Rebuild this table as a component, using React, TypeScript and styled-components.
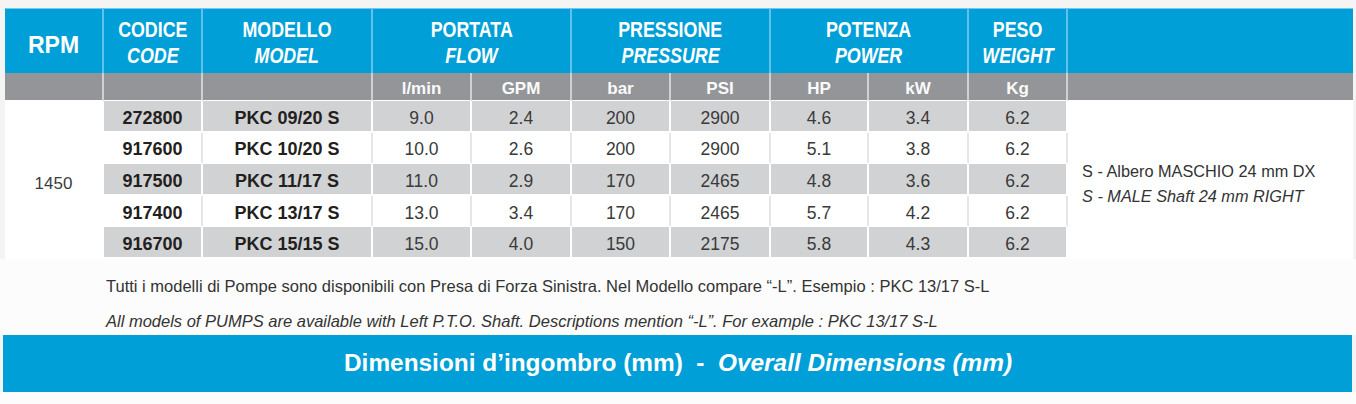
import styled, { createGlobalStyle } from 'styled-components';

const GlobalStyle = createGlobalStyle`
  body {
    margin: 0;
    background: #f4f4f4;
    font-family: "Liberation Sans", Arial, sans-serif;
  }
`;

const BLUE = '#009fd7';

interface Pump {
  code: string;
  model: string;
  lmin: string;
  gpm: string;
  bar: string;
  psi: string;
  hp: string;
  kw: string;
  kg: string;
}

const pumps: Pump[] = [
  { code: '272800', model: 'PKC 09/20 S', lmin: '9.0', gpm: '2.4', bar: '200', psi: '2900', hp: '4.6', kw: '3.4', kg: '6.2' },
  { code: '917600', model: 'PKC 10/20 S', lmin: '10.0', gpm: '2.6', bar: '200', psi: '2900', hp: '5.1', kw: '3.8', kg: '6.2' },
  { code: '917500', model: 'PKC 11/17 S', lmin: '11.0', gpm: '2.9', bar: '170', psi: '2465', hp: '4.8', kw: '3.6', kg: '6.2' },
  { code: '917400', model: 'PKC 13/17 S', lmin: '13.0', gpm: '3.4', bar: '170', psi: '2465', hp: '5.7', kw: '4.2', kg: '6.2' },
  { code: '916700', model: 'PKC 15/15 S', lmin: '15.0', gpm: '4.0', bar: '150', psi: '2175', hp: '5.8', kw: '4.3', kg: '6.2' },
];

const Page = styled.div`
  padding-top: 8px;
  width: 1356px;
`;

const Table = styled.div`
  margin-left: 5px;
  width: 1348px;
  display: grid;
  grid-template-columns: 99px 99px 170px 99px 100px 99px 100px 98px 100px 99px 285px;
  grid-template-rows: 65px 28px repeat(5, 31.6px);
  background: #fff;
`;

const HeadCell = styled.div<{ $span?: number; $last?: boolean }>`
  grid-column: span ${({ $span }) => $span || 1};
  background: ${BLUE};
  border-top: 1px solid #6fcbee;
  border-right: ${({ $last }) => ($last ? 'none' : '2px solid #5fc2ea')};
  display: flex;
  flex-direction: column;
  align-items: center;
  justify-content: center;
  padding-top: 4px;
  color: #fff;
  font-weight: 700;
  font-size: 22px;
  line-height: 26px;
  box-sizing: border-box;
`;

// the print uses a condensed face; squeeze the regular one
const HeadText = styled.span<{ $italic?: boolean }>`
  display: inline-block;
  white-space: nowrap;
  transform: scaleX(0.81);
  font-style: ${({ $italic }) => ($italic ? 'italic' : 'normal')};
`;

const RpmLabel = styled.span`
  font-size: 23px;
  padding-top: 4px;
`;

const UnitCell = styled.div<{ $last?: boolean }>`
  background: #939598;
  border-right: ${({ $last }) => ($last ? 'none' : '2px solid #cfd0d2')};
  border-bottom: 1px solid #fff;
  display: flex;
  align-items: center;
  justify-content: center;
  padding-top: 4px;
  color: #fafafa;
  font-weight: 700;
  font-size: 17px;
  box-sizing: border-box;
`;

const SideCell = styled.div<{ $col: number }>`
  grid-column: ${({ $col }) => $col};
  grid-row: 3 / span 5;
  display: flex;
  align-items: center;
  padding-top: 8px;
  box-sizing: border-box;
  color: #3c3c3c;
`;

const RpmValue = styled(SideCell)`
  justify-content: center;
  font-size: 17px;
  border-right: 2px solid #fff;
`;

const Notes = styled(SideCell)`
  flex-direction: column;
  align-items: flex-start;
  justify-content: center;
  padding-left: 14px;
  font-size: 16.3px;
  line-height: 25px;
  white-space: nowrap;
  color: #333;
`;

const NoteEn = styled.span`
  font-style: italic;
`;

const DataCell = styled.div<{ $shade: boolean; $strong?: boolean }>`
  background: ${({ $shade }) => ($shade ? '#d1d2d4' : '#fff')};
  border-right: 2px solid ${({ $shade }) => ($shade ? '#fff' : '#e6e6e6')};
  border-bottom: 2px solid #fff;
  display: flex;
  align-items: center;
  justify-content: center;
  padding-top: 5px;
  box-sizing: border-box;
  font-size: ${({ $strong }) => ($strong ? '18px' : '17.5px')};
  font-weight: ${({ $strong }) => ($strong ? 700 : 400)};
  color: ${({ $strong }) => ($strong ? '#231f20' : '#3a3a3a')};
`;

const Footer = styled.div`
  background: #fcfcfc;
  padding: 17px 0 0 106px;
  height: 76px;
  box-sizing: border-box;
  color: #333;
  font-size: 16.5px;
`;

const FootLine = styled.div<{ $italic?: boolean }>`
  height: 35px;
  line-height: 20px;
  white-space: nowrap;
  font-style: ${({ $italic }) => ($italic ? 'italic' : 'normal')};
`;

const Banner = styled.div`
  margin-left: 3px;
  width: 1349px;
  height: 57px;
  background: ${BLUE};
  display: flex;
  align-items: center;
  padding-left: 341px;
  box-sizing: border-box;
  color: #fff;
  font-weight: 700;
  font-size: 24.4px;
  white-space: pre;
`;

const BannerEn = styled.span`
  font-style: italic;
`;

const Bottom = styled.div`
  height: 12px;
  background: #fcfcfc;
`;

const heads: { it: string; en: string; span: number }[] = [
  { it: 'CODICE', en: 'CODE', span: 1 },
  { it: 'MODELLO', en: 'MODEL', span: 1 },
  { it: 'PORTATA', en: 'FLOW', span: 2 },
  { it: 'PRESSIONE', en: 'PRESSURE', span: 2 },
  { it: 'POTENZA', en: 'POWER', span: 2 },
  { it: 'PESO', en: 'WEIGHT', span: 1 },
];

const units = ['', '', '', 'l/min', 'GPM', 'bar', 'PSI', 'HP', 'kW', 'Kg', ''];

export default function App() {
  return (
    <Page>
      <GlobalStyle />
      <Table>
        <HeadCell>
          <RpmLabel>RPM</RpmLabel>
        </HeadCell>
        {heads.map((h) => (
          <HeadCell key={h.it} $span={h.span}>
            <HeadText>{h.it}</HeadText>
            <HeadText $italic>{h.en}</HeadText>
          </HeadCell>
        ))}
        <HeadCell $last />
        {units.map((u, i) => (
          <UnitCell key={i} $last={i === units.length - 1}>{u}</UnitCell>
        ))}
        <RpmValue $col={1}>1450</RpmValue>
        {pumps.map((p, r) => {
          const shade = r % 2 === 0;
          const vals = [p.lmin, p.gpm, p.bar, p.psi, p.hp, p.kw, p.kg];
          return [
            <DataCell key={r + 'c'} $shade={shade} $strong style={{ gridColumn: 2, gridRow: r + 3 }}>{p.code}</DataCell>,
            <DataCell key={r + 'm'} $shade={shade} $strong style={{ gridColumn: 3, gridRow: r + 3 }}>{p.model}</DataCell>,
            ...vals.map((v, i) => (
              <DataCell key={r + '-' + i} $shade={shade} style={{ gridColumn: i + 4, gridRow: r + 3 }}>{v}</DataCell>
            )),
          ];
        })}
        <Notes $col={11}>
          <span>S - Albero MASCHIO 24 mm DX</span>
          <NoteEn>S - MALE Shaft 24 mm RIGHT</NoteEn>
        </Notes>
      </Table>
      <Footer>
        <FootLine>Tutti i modelli di Pompe sono disponibili con Presa di Forza Sinistra. Nel Modello compare “-L”. Esempio : PKC 13/17 S-L</FootLine>
        <FootLine $italic>All models of PUMPS are available with Left P.T.O. Shaft. Descriptions mention “-L”. For example : PKC 13/17 S-L</FootLine>
      </Footer>
      <Banner>
        Dimensioni d’ingombro (mm)  -  <BannerEn>Overall Dimensions (mm)</BannerEn>
      </Banner>
      <Bottom />
    </Page>
  );
}
